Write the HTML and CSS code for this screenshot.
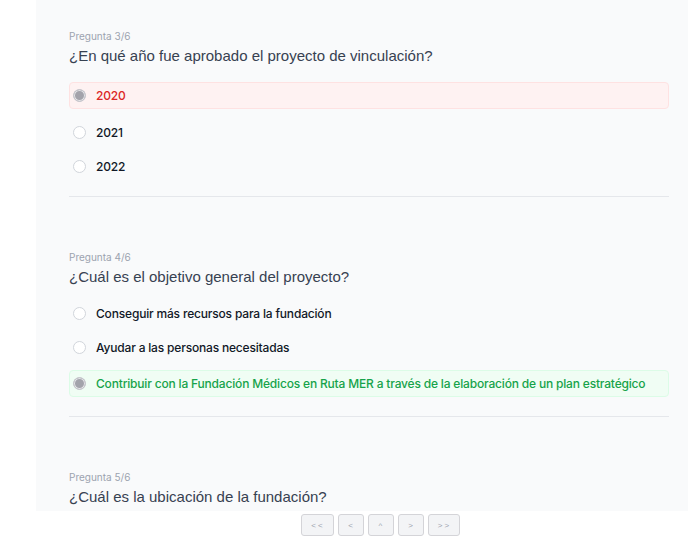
FILE: index.html
```html
<!DOCTYPE html>
<html lang="es">
<head>
<meta charset="utf-8">
<title>Preguntas</title>
<link rel="stylesheet" href="styles.css">
</head>
<body>
<div class="page">
  <main class="panel">
    <section class="question">
      <div class="q-label">Pregunta 3/6</div>
      <h2 class="q-title">¿En qué año fue aprobado el proyecto de vinculación?</h2>
      <ul class="options">
        <li class="option wrong"><span class="radio checked"></span><span>2020</span></li>
        <li class="option"><span class="radio"></span><span>2021</span></li>
        <li class="option"><span class="radio"></span><span>2022</span></li>
      </ul>
    </section>
    <section class="question">
      <div class="q-label">Pregunta 4/6</div>
      <h2 class="q-title">¿Cuál es el objetivo general del proyecto?</h2>
      <ul class="options">
        <li class="option"><span class="radio"></span><span>Conseguir más recursos para la fundación</span></li>
        <li class="option"><span class="radio"></span><span>Ayudar a las personas necesitadas</span></li>
        <li class="option right"><span class="radio checked"></span><span>Contribuir con la Fundación Médicos en Ruta MER a través de la elaboración de un plan estratégico</span></li>
      </ul>
    </section>
    <section class="question">
      <div class="q-label">Pregunta 5/6</div>
      <h2 class="q-title">¿Cuál es la ubicación de la fundación?</h2>
    </section>
  </main>
  <nav class="pager">
    <button class="pg-btn wide">&lt;&lt;</button>
    <button class="pg-btn">&lt;</button>
    <button class="pg-btn">^</button>
    <button class="pg-btn">&gt;</button>
    <button class="pg-btn wide">&gt;&gt;</button>
  </nav>
</div>
</body>
</html>
```

FILE: styles.css
```css
* { box-sizing: border-box; }
html, body { margin: 0; padding: 0; background: #ffffff; }
body {
  font-family: Inter, "Noto Sans", "Liberation Sans", sans-serif;
  color: #111827;
  width: 688px;
  height: 554px;
  overflow: hidden;
}
.page { display: flex; flex-direction: column; }
.panel {
  margin-left: 36px;
  height: 511px;
  overflow: hidden;
  background: #f9fafb;
  padding: 29px 19px 0 33px;
}
.question {
  padding-bottom: 16px;
  border-bottom: 1px solid #e5e7eb;
  margin-bottom: 53px;
}
.q-label {
  font-size: 10px;
  line-height: 14px;
  color: #9ca3af;
}
.q-title {
  margin: 2px 0 0;
  font-family: "Liberation Sans", Arial, sans-serif;
  font-size: 15px;
  line-height: 22px;
  font-weight: 400;
  color: #374151;
}
.options {
  list-style: none;
  margin: 12px 0 0;
  padding: 0;
  display: flex;
  flex-direction: column;
  gap: 7px;
}
.option {
  display: flex;
  align-items: center;
  gap: 10px;
  height: 27px;
  padding: 0 3px;
  border: 1px solid transparent;
  border-radius: 4px;
  font-size: 12px;
  letter-spacing: -0.18px;
  font-weight: 500;
  color: #111827;
}
.option.wrong {
  margin: 3px 0;
  background: #fef2f2;
  border-color: #fee2e2;
  color: #dc2626;
}
.option.right {
  margin: 2px 0 3px;
  background: #f0fdf4;
  border-color: #dcfce7;
  color: #16a34a;
}
.radio {
  flex: none;
  width: 13px;
  height: 13px;
  border-radius: 50%;
  border: 1px solid #d1d5db;
  background: #ffffff;
}
.radio.checked {
  border-color: #c6c6cc;
  background: #a3a3ab;
  box-shadow: inset 0 0 0 1px #e4e4e7;
}
.pager {
  display: flex;
  justify-content: center;
  gap: 4px;
  margin-top: 3px;
  padding-left: 72px;
}
.pg-btn {
  width: 26px;
  height: 22px;
  padding: 0;
  background: #f3f4f6;
  border: 1px solid #d4d4d8;
  border-radius: 3px;
  font-family: "Liberation Sans", Arial, sans-serif;
  font-size: 8px;
  letter-spacing: 2px;
  text-indent: 2px;
  color: #9ca3af;
}
.pg-btn.wide { width: 33px; }
.pg-btn.wide:last-child { width: 32px; }
```
